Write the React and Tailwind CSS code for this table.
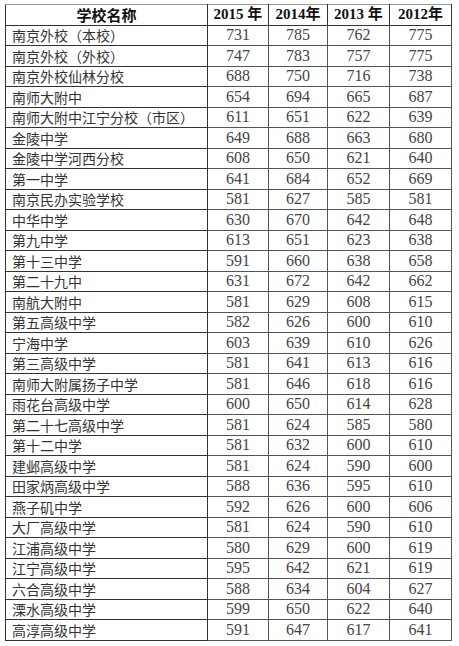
import React from 'react';

const ROWS = [
  ['南京外校（本校）', 731, 785, 762, 775],
  ['南京外校（外校）', 747, 783, 757, 775],
  ['南京外校仙林分校', 688, 750, 716, 738],
  ['南师大附中', 654, 694, 665, 687],
  ['南师大附中江宁分校（市区）', 611, 651, 622, 639],
  ['金陵中学', 649, 688, 663, 680],
  ['金陵中学河西分校', 608, 650, 621, 640],
  ['第一中学', 641, 684, 652, 669],
  ['南京民办实验学校', 581, 627, 585, 581],
  ['中华中学', 630, 670, 642, 648],
  ['第九中学', 613, 651, 623, 638],
  ['第十三中学', 591, 660, 638, 658],
  ['第二十九中', 631, 672, 642, 662],
  ['南航大附中', 581, 629, 608, 615],
  ['第五高级中学', 582, 626, 600, 610],
  ['宁海中学', 603, 639, 610, 626],
  ['第三高级中学', 581, 641, 613, 616],
  ['南师大附属扬子中学', 581, 646, 618, 616],
  ['雨花台高级中学', 600, 650, 614, 628],
  ['第二十七高级中学', 581, 624, 585, 580],
  ['第十二中学', 581, 632, 600, 610],
  ['建邺高级中学', 581, 624, 590, 600],
  ['田家炳高级中学', 588, 636, 595, 610],
  ['燕子矶中学', 592, 626, 600, 606],
  ['大厂高级中学', 581, 624, 590, 610],
  ['江浦高级中学', 580, 629, 600, 619],
  ['江宁高级中学', 595, 642, 621, 619],
  ['六合高级中学', 588, 634, 604, 627],
  ['溧水高级中学', 599, 650, 622, 640],
  ['高淳高级中学', 591, 647, 617, 641],
];

const YEARS = ['2015 年', '2014年', '2013 年', '2012年'];

const cjk = "font-['Noto_Sans_CJK_SC',sans-serif]";
const num = "font-['Liberation_Serif','Noto_Sans_CJK_SC',serif]";

export default function App() {
  return (
    <div className="w-[459px] h-[646px] bg-white pt-[4px] pl-[5px]">
      <table className="border-collapse table-fixed w-[446px] text-[#111]">
        <colgroup>
          <col className="w-[202px]" />
          <col className="w-[61px]" />
          <col className="w-[59px]" />
          <col className="w-[62px]" />
          <col className="w-[62px]" />
        </colgroup>
        <thead>
          <tr className="h-[20.5px]">
            <th className={`border border-[#333] border-t-[#999] p-0 text-[15px] font-bold leading-none text-center ${cjk}`}>
              学校名称
            </th>
            {YEARS.map((y) => (
              <th key={y} className={`border border-[#333] border-t-[#999] p-0 text-[15px] font-bold leading-none text-center ${num}`}>
                {y}
              </th>
            ))}
          </tr>
        </thead>
        <tbody>
          {ROWS.map(([name, ...scores]) => (
            <tr key={name} className="h-[20.5px]">
              <td className={`border border-[#333] p-0 pl-[6px] text-[14px] leading-none whitespace-nowrap text-[#333] ${cjk}`}>
                {name}
              </td>
              {scores.map((s, i) => (
                <td key={i} className={`border border-[#555] p-0 text-[16px] leading-none text-center text-[#444] ${num}`}>
                  {s}
                </td>
              ))}
            </tr>
          ))}
        </tbody>
      </table>
    </div>
  );
}
